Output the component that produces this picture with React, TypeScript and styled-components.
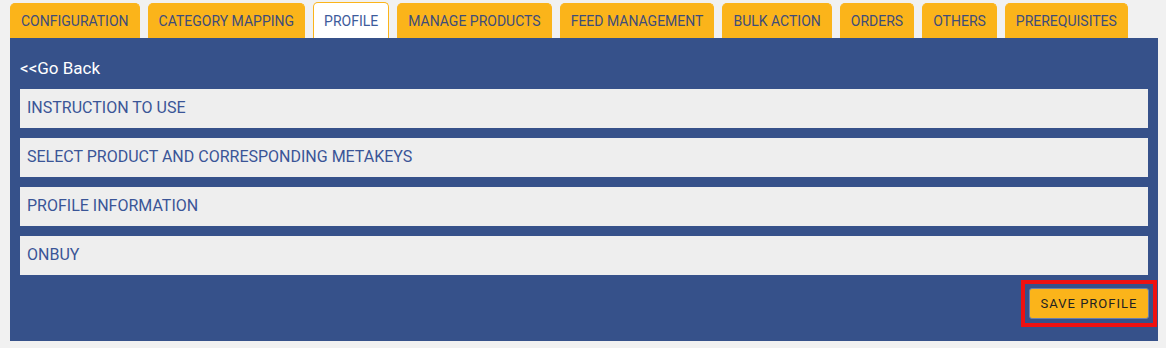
import React from "react";
import styled, { createGlobalStyle } from "styled-components";

const GlobalStyle = createGlobalStyle`
  body {
    margin: 0;
    background: #f1f1f1;
    font-family: Roboto, "Liberation Sans", Arial, sans-serif;
  }
`;

const Page = styled.div`
  padding: 3px 8px 7px 10px;
`;

const TabBar = styled.div`
  display: flex;
  align-items: flex-end;
  gap: 8px;
  height: 35px;
`;

const Tab = styled.div<{ $active?: boolean }>`
  height: ${(p) => (p.$active ? "36px" : "35px")};
  box-sizing: border-box;
  display: flex;
  align-items: center;
  padding: 0 10px;
  border-radius: 5px 5px 0 0;
  font-size: 14px;
  white-space: nowrap;
  background: ${(p) => (p.$active ? "#ffffff" : "#fbb41a")};
  border: 1px solid #fbb41a;
  border-bottom: none;
  color: ${(p) => (p.$active ? "#3d5b9c" : "#3e4c7a")};
`;

const Panel = styled.div`
  background: #36518a;
  padding: 20px 10px 14px 10px;
  display: flex;
  flex-direction: column;
`;

const GoBack = styled.a`
  color: #ffffff;
  font-size: 17px;
  line-height: 21px;
  margin-bottom: 10px;
`;

const RowList = styled.div`
  display: flex;
  flex-direction: column;
  gap: 10px;
`;

const Row = styled.div`
  height: 39px;
  box-sizing: border-box;
  display: flex;
  align-items: center;
  padding: 0 0 2px 7px;
  background: #eeeeee;
  color: #3a5597;
  font-size: 16px;
`;

const Footer = styled.div`
  display: flex;
  justify-content: flex-end;
  margin: 5px -9px 0 0;
`;

const Highlight = styled.div`
  border: 4px solid #ee1111;
  padding: 4px;
`;

const SaveButton = styled.button`
  width: 120px;
  height: 31px;
  background: #fbb41a;
  border: 1px solid #6a7fae;
  border-radius: 3px;
  color: #222222;
  font-family: Roboto, "Liberation Sans", Arial, sans-serif;
  font-size: 13px;
  letter-spacing: 1px;
`;

const tabs = [
  "CONFIGURATION",
  "CATEGORY MAPPING",
  "PROFILE",
  "MANAGE PRODUCTS",
  "FEED MANAGEMENT",
  "BULK ACTION",
  "ORDERS",
  "OTHERS",
  "PREREQUISITES",
];

const sections = [
  "INSTRUCTION TO USE",
  "SELECT PRODUCT AND CORRESPONDING METAKEYS",
  "PROFILE INFORMATION",
  "ONBUY",
];

export default function App() {
  return (
    <>
      <GlobalStyle />
      <Page>
        <TabBar>
          {tabs.map((t) => (
            <Tab key={t} $active={t === "PROFILE"}>
              {t}
            </Tab>
          ))}
        </TabBar>
        <Panel>
          <GoBack>&lt;&lt;Go Back</GoBack>
          <RowList>
            {sections.map((s) => (
              <Row key={s}>{s}</Row>
            ))}
          </RowList>
          <Footer>
            <Highlight>
              <SaveButton>SAVE PROFILE</SaveButton>
            </Highlight>
          </Footer>
        </Panel>
      </Page>
    </>
  );
}
